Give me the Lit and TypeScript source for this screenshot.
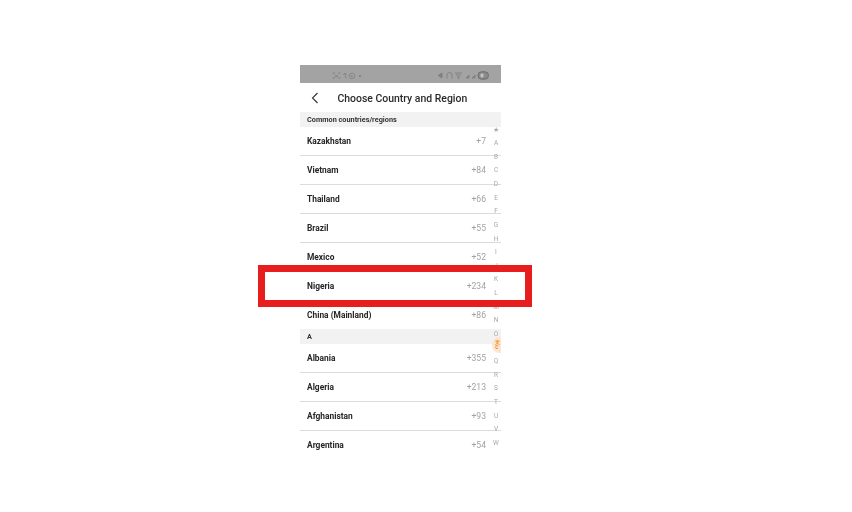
import { LitElement, html, css } from "lit";
import { customElement } from "lit/decorators.js";

const common: [string, string][] = [
  ["Kazakhstan", "+7"], ["Vietnam", "+84"], ["Thailand", "+66"], ["Brazil", "+55"],
  ["Mexico", "+52"], ["Nigeria", "+234"], ["China (Mainland)", "+86"],
];
const a: [string, string][] = [
  ["Albania", "+355"], ["Algeria", "+213"], ["Afghanistan", "+93"], ["Argentina", "+54"],
];
const letters = ["★","A","B","C","D","E","F","G","H","I","J","K","L","M","N","O","","Q","R","S","T","U","V","W"];

@customElement("app-root")
export class AppRoot extends LitElement {
  static styles = css`
    :host { display: block; width: 852px; height: 512px; position: relative; overflow: hidden; background: #fff;
      font-family: Roboto, "Liberation Sans", sans-serif; }
    .page { display: flex; padding: 65px 0 0 300px; }
    .phone { width: 201px; height: 387px; position: relative; overflow: hidden; background: #fff; filter: blur(0.4px); }
    .status { height: 18px; box-sizing: border-box; background: #a3a3a3; display: flex; align-items: center; justify-content: space-between; padding: 3px 12px 0 32px; }
    .status svg { display: block; filter: blur(0.5px); }
    .nav { height: 29px; display: flex; align-items: center; padding-left: 11px; }
    .nav svg { display: block; }
    .title { margin: 1px 0 0 18.5px; font-size: 10.45px; font-weight: 500; color: #2a2a2a; white-space: nowrap; }
    .section { height: 15px; background: #f2f2f2; display: flex; align-items: center; padding-left: 7px;
      font-size: 7.3px; font-weight: 700; color: #333; }
    .row { height: 29px; box-sizing: border-box; display: flex; align-items: center; justify-content: space-between;
      padding: 0 15px 0 7px; border-bottom: 1px solid #dcdcdc; }
    .row.last { border-bottom: none; height: 28px; }
    .name { font-size: 8.4px; font-weight: 700; color: #262626; }
    .code { font-size: 8.6px; color: #a2a2a2; }
    .index { position: absolute; right: 0; top: 58.5px; width: 10px; display: flex; flex-direction: column; align-items: center; }
    .index span { height: 13.64px; line-height: 13.64px; font-size: 6.5px; color: #a8a8a8; }
    .bubble { position: absolute; right: -5px; top: 272px; width: 14px; height: 16px; border-radius: 50%; background: #fce6d2;
      color: #ee8a2c; font-size: 5px; line-height: 5.4px; font-weight: 700; display: flex; flex-direction: column; align-items: center; justify-content: center; padding-right: 4px; box-sizing: border-box; }
    .mark { position: absolute; left: 258px; top: 265px; width: 274px; height: 42px; box-sizing: border-box;
      border: 7.5px solid #e81e1e; }
  `;

  private row(r: [string, string], last = false) {
    return html`<div class="row ${last ? "last" : ""}"><span class="name">${r[0]}</span><span class="code">${r[1]}</span></div>`;
  }

  render() {
    return html`
      <div class="page">
        <div class="phone">
          <div class="status">
            <svg width="30" height="8" viewBox="0 0 30 8" fill="none" stroke="#858585" stroke-width="0.9">
              <path d="M1 2V1h2M6 1h2v1M1 5v1h2M6 6h2V5M3 3l3 2M6 3L3 5"/>
              <path d="M11 3l2-2 2 2M13 1v3a2 2 0 0 0 2 2"/>
              <circle cx="20" cy="4" r="2.8"/>
              <path d="M18.8 3l1 2 1.4-.8"/>
              <circle cx="28" cy="4" r="0.8" fill="#858585"/>
            </svg>
            <svg width="52" height="9" viewBox="0 0 52 9" fill="none" stroke="#808080" stroke-width="0.9">
              <path d="M1 4.5L5 2v5z" fill="#808080"/>
              <path d="M10 7.5V4a2.5 2.5 0 0 1 5 0v3.5"/>
              <path d="M18 2h7M19 4h5M20 6h3M21.5 6v2"/>
              <path d="M29 7l3-3v3zM35 7l3-3v3z" fill="#8c8c8c"/>
              <rect x="41" y="0.8" width="10.5" height="7.4" rx="3.6" fill="#8a8a8a" stroke="#6a6a6a"/>
              <rect x="43.5" y="2.4" width="3" height="4.2" rx="1" fill="#c2c2c2" stroke="none"/>
            </svg>
          </div>
          <div class="nav">
            <svg width="8" height="12" viewBox="0 0 8 12" fill="none" stroke="#333" stroke-width="1.1">
              <path d="M6.5 1L1.5 6l5 5"/>
            </svg>
            <span class="title">Choose Country and Region</span>
          </div>
          <div class="section">Common countries/regions</div>
          ${common.map((r, i) => this.row(r, i === common.length - 1))}
          <div class="section">A</div>
          ${a.map((r) => this.row(r))}
          <div class="index">${letters.map((l) => html`<span>${l}</span>`)}</div>
          <div class="bubble"><span>文</span><span>C</span></div>
        </div>
      </div>
      <div class="mark"></div>
    `;
  }
}
